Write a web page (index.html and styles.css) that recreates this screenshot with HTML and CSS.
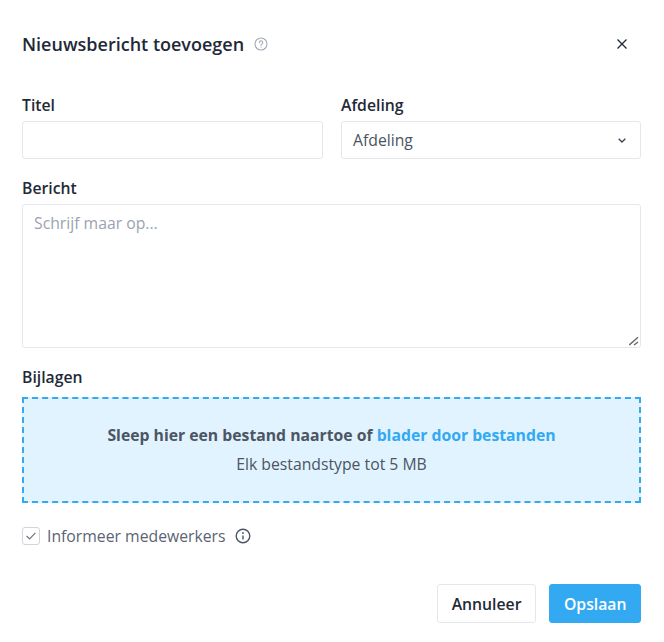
FILE: index.html
```html
<!DOCTYPE html>
<html lang="nl">
<head>
    <meta charset="UTF-8">
    <meta name="viewport" content="width=device-width, initial-scale=1.0">
    <title>Nieuwsbericht toevoegen</title>
    <link rel="stylesheet" href="styles.css">
</head>
<body>
    <div class="modal">
        <div class="modal-header">
            <h1>Nieuwsbericht toevoegen</h1>
            <svg class="help-icon" width="14" height="14" viewBox="0 0 14 14" fill="none" stroke="#a3abb8" stroke-width="1.1">
                <circle cx="7" cy="7" r="6"/>
                <path d="M5.3 5.6a1.75 1.75 0 1 1 2.6 1.5c-.6.35-.9.6-.9 1.2" stroke-linecap="round"/>
                <circle cx="7" cy="10.1" r=".55" fill="#a3abb8" stroke="none"/>
            </svg>
            <button class="close-button" type="button" aria-label="Sluiten">
                <svg width="10" height="10" viewBox="0 0 10 10" fill="none" stroke="#1f2937" stroke-width="1.3">
                    <path d="M.5.5l9 9M9.5.5l-9 9"/>
                </svg>
            </button>
        </div>

        <form>
            <div class="form-row">
                <div class="field">
                    <label for="titel">Titel</label>
                    <input type="text" id="titel">
                </div>
                <div class="field">
                    <label for="afdeling">Afdeling</label>
                    <div class="select">
                        <span>Afdeling</span>
                        <svg width="8" height="5" viewBox="0 0 8 5" fill="none" stroke="#374151" stroke-width="1.3">
                            <path d="M.7.7L4 4l3.3-3.3"/>
                        </svg>
                    </div>
                </div>
            </div>

            <div class="field">
                <label for="bericht">Bericht</label>
                <div class="textarea-wrap">
                    <textarea id="bericht" placeholder="Schrijf maar op..."></textarea>
                    <!-- resize grip -->
                    <svg class="grip" width="10" height="10" viewBox="0 0 10 10" fill="none" stroke="#666" stroke-width="1.4">
                        <path d="M.3 9L9 1.3M5 9l4-3"/>
                    </svg>
                </div>
            </div>

            <div class="field">
                <label class="label-spaced">Bijlagen</label>
                <div class="dropzone">
                    <p class="drop-title">Sleep hier een bestand naartoe of <a href="#">blader door bestanden</a></p>
                    <p class="drop-hint">Elk bestandstype tot 5 MB</p>
                </div>
            </div>

            <div class="notify">
                <span class="checkbox">
                    <svg width="10" height="8" viewBox="0 0 10 8" fill="none" stroke="#6b7280" stroke-width="1.1">
                        <path d="M.6 4l3 3L9.4.8"/>
                    </svg>
                </span>
                <span>Informeer medewerkers</span>
                <svg class="info-icon" width="16" height="16" viewBox="0 0 16 16" fill="none" stroke="#4b5563" stroke-width="1.4">
                    <circle cx="8" cy="8" r="6.8"/>
                    <path d="M8 7.4v4"/>
                    <circle cx="8" cy="5" r=".9" fill="#4b5563" stroke="none"/>
                </svg>
            </div>

            <div class="actions">
                <button type="button" class="btn">Annuleer</button>
                <button type="submit" class="btn btn-primary">Opslaan</button>
            </div>
        </form>
    </div>
</body>
</html>
```

FILE: styles.css
```css
* {
    box-sizing: border-box;
}
body {
    font-family: "Open Sans", sans-serif;
    margin: 0;
    background-color: #fff;
    color: #1f2937;
}
.modal {
    padding: 32px 23px 19px 22px;
}
.modal-header {
    display: flex;
    align-items: center;
    height: 24px;
    margin-bottom: 37px;
}
.modal-header h1 {
    margin: 0;
    font-size: 18px;
    font-weight: 600;
    line-height: 24px;
}
.help-icon {
    margin-left: 10px;
}
.close-button {
    display: flex;
    margin-left: auto;
    margin-right: 14px;
    padding: 0;
    border: none;
    background: none;
}
.form-row {
    display: grid;
    grid-template-columns: 301px 300px;
    gap: 18px;
}
.field {
    margin-bottom: 17px;
}
label {
    display: block;
    height: 24px;
    margin-bottom: 4px;
    font-size: 15.75px;
    font-weight: 600;
    line-height: 24px;
    color: #1f2937;
}
.label-spaced {
    margin-bottom: 8px;
}
input[type="text"],
.select,
textarea {
    display: block;
    width: 100%;
    border: 1px solid #e5e7eb;
    border-radius: 3px;
    background-color: #fff;
    font-family: inherit;
    font-size: 15.75px;
}
input[type="text"],
.select {
    height: 38px;
}
.select {
    display: flex;
    align-items: center;
    justify-content: space-between;
    padding: 0 14px 0 11px;
    color: #4b5563;
}
.textarea-wrap {
    position: relative;
}
textarea {
    height: 144px;
    padding: 6px 11px;
    line-height: 24px;
    resize: none;
}
textarea::placeholder {
    color: #9ca3af;
    opacity: 1;
}
.grip {
    position: absolute;
    right: 2px;
    bottom: 2px;
}
.dropzone {
    height: 106px;
    padding-top: 24px;
    border: 2px dashed #33a9f2;
    background-color: #e1f3fe;
    text-align: center;
    font-size: 15.75px;
    line-height: 24px;
}
.dropzone p {
    margin: 0;
}
.drop-title {
    font-weight: 700;
    color: #4b5563;
    padding-bottom: 5px;
}
.drop-title a {
    color: #33a9f2;
    text-decoration: none;
}
.drop-hint {
    color: #4b5563;
}
.notify {
    display: flex;
    align-items: center;
    gap: 7px;
    height: 18px;
    margin-top: 24px;
    font-size: 15.75px;
    color: #5b6472;
}
.checkbox {
    display: flex;
    align-items: center;
    justify-content: center;
    width: 18px;
    height: 18px;
    border: 1px solid #d1d5db;
    border-radius: 3px;
}
.info-icon {
    margin-left: 2px;
}
.actions {
    display: flex;
    justify-content: flex-end;
    gap: 13px;
    margin-top: 39px;
}
.btn {
    height: 39px;
    padding: 0 14px;
    border: 1px solid #e5e7eb;
    border-radius: 3px;
    background-color: #fff;
    color: #1f2937;
    font-family: inherit;
    font-size: 15.75px;
    font-weight: 600;
}
.btn-primary {
    padding: 0 13.5px;
    border-color: #33a9f2;
    background-color: #33a9f2;
    color: #fff;
}
```
